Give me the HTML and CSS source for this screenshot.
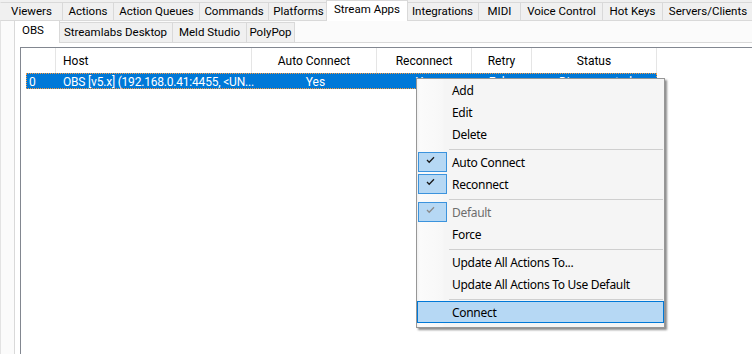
FILE: index.html
```html
<!DOCTYPE html>
<html>
<head>
<meta charset="utf-8">
<link rel="stylesheet" href="styles.css">
</head>
<body>
<div class="app">
  <div class="tabstrip top">
    <div class="tab">Viewers</div>
    <div class="tab">Actions</div>
    <div class="tab">Action Queues</div>
    <div class="tab">Commands</div>
    <div class="tab">Platforms</div>
    <div class="tab active">Stream Apps</div>
    <div class="tab">Integrations</div>
    <div class="tab">MIDI</div>
    <div class="tab">Voice Control</div>
    <div class="tab">Hot Keys</div>
    <div class="tab">Servers/Clients</div>
  </div>
  <div class="page">
    <div class="tabstrip sub">
      <div class="tab active">OBS</div>
      <div class="tab">Streamlabs Desktop</div>
      <div class="tab">Meld Studio</div>
      <div class="tab">PolyPop</div>
    </div>
    <div class="subpage">
      <div class="listview">
        <div class="lv-header">
          <div class="hc"></div>
          <div class="hc left">Host</div>
          <div class="hc">Auto Connect</div>
          <div class="hc">Reconnect</div>
          <div class="hc">Retry</div>
          <div class="hc">Status</div>
        </div>
        <div class="lv-row selected">
          <div class="rc left">0</div>
          <div class="rc left host">OBS [v5.x] (192.168.0.41:4455, &lt;UN...</div>
          <div class="rc">Yes</div>
          <div class="rc">Yes</div>
          <div class="rc">False</div>
          <div class="rc">Disconnected</div>
        </div>
      </div>
    </div>
  </div>

  <div class="menu">
    <div class="mi"><span class="gut"></span><span class="lbl">Add</span></div>
    <div class="mi"><span class="gut"></span><span class="lbl">Edit</span></div>
    <div class="mi"><span class="gut"></span><span class="lbl">Delete</span></div>
    <div class="sep"></div>
    <div class="mi"><span class="gut checked"><svg width="9" height="8" viewBox="0 0 9 8"><path d="M1 4 L3.2 6.2 L8 1.2" fill="none" stroke="#1a1a1a" stroke-width="1.3"/></svg></span><span class="lbl">Auto Connect</span></div>
    <div class="mi"><span class="gut checked"><svg width="9" height="8" viewBox="0 0 9 8"><path d="M1 4 L3.2 6.2 L8 1.2" fill="none" stroke="#1a1a1a" stroke-width="1.3"/></svg></span><span class="lbl">Reconnect</span></div>
    <div class="sep"></div>
    <div class="mi disabled"><span class="gut checked"><svg width="9" height="8" viewBox="0 0 9 8"><path d="M1 4 L3.2 6.2 L8 1.2" fill="none" stroke="#8a8a8a" stroke-width="1.3"/></svg></span><span class="lbl">Default</span></div>
    <div class="mi"><span class="gut"></span><span class="lbl">Force</span></div>
    <div class="sep"></div>
    <div class="mi"><span class="gut"></span><span class="lbl">Update All Actions To...</span></div>
    <div class="mi"><span class="gut"></span><span class="lbl">Update All Actions To Use Default</span></div>
    <div class="sep"></div>
    <div class="mi hover"><span class="gut"></span><span class="lbl">Connect</span></div>
  </div>
</div>
</body>
</html>
```

FILE: styles.css
```css
html, body {
  margin: 0;
  padding: 0;
}
body {
  width: 752px;
  height: 354px;
  overflow: hidden;
  background: #f0f0f0;
  font-family: Roboto, "Liberation Sans", sans-serif;
  font-size: 12px;
  color: #000;
}
.app {
  position: relative;
  width: 752px;
  height: 354px;
  display: flex;
  flex-direction: column;
}

/* tabs */
.tabstrip {
  display: flex;
  align-items: flex-end;
  position: relative;
  z-index: 2;
  font-size: 11.5px;
}
.tabstrip.top {
  height: 20px;
  flex: none;
}
.tab {
  height: 18px;
  line-height: 17px;
  text-align: center;
  background: #f0f0f0;
  border-left: 1px solid #d9d9d9;
  border-top: 1px solid #d9d9d9;
  white-space: nowrap;
  box-sizing: border-box;
  flex: none;
}
.tab:last-child {
  border-right: 1px solid #d9d9d9;
}
.tabstrip.top .tab:first-child {
  border-left-color: transparent;
}
.tabstrip.top .tab:nth-child(1) { width: 62px; }
.tabstrip.top .tab:nth-child(2) { width: 51px; }
.tabstrip.top .tab:nth-child(3) { width: 86px; }
.tabstrip.top .tab:nth-child(4) { width: 69px; }
.tabstrip.top .tab:nth-child(5) { width: 60px; }
.tabstrip.top .tab:nth-child(6) { width: 82px; }
.tabstrip.top .tab:nth-child(7) { width: 72px; }
.tabstrip.top .tab:nth-child(8) { width: 42px; }
.tabstrip.top .tab:nth-child(9) { width: 82px; }
.tabstrip.top .tab:nth-child(10) { width: 60px; }
.tabstrip.top .tab:nth-child(11) { width: 92px; }

.tab.active {
  background: #fff;
  height: 21px;
  line-height: 17px;
  margin: 0 -2px -1px -2px;
  border-right: 1px solid #d9d9d9;
  position: relative;
  z-index: 3;
}

.page {
  flex: 1;
  background: #fbfbfb;
  border-top: 1px solid #d9d9d9;
  border-left: 1px solid #e3e3e3;
  display: flex;
  flex-direction: column;
  padding-left: 13px;
  min-height: 0;
}
.tabstrip.sub {
  height: 21px;
  flex: none;
  padding-left: 2px;
}
.tabstrip.sub .tab {
  height: 20px;
  line-height: 19px;
}
.tabstrip.sub .tab:nth-child(1) { width: 46px; }
.tabstrip.sub .tab:nth-child(2) { width: 114px; }
.tabstrip.sub .tab:nth-child(3) { width: 74px; }
.tabstrip.sub .tab:nth-child(4) { width: 49px; }
.tabstrip.sub .tab.active {
  height: 23px;
  line-height: 19px;
  text-align: left;
  padding-left: 7px;
}
.subpage {
  flex: 1;
  background: #fff;
  border-top: 1px solid #d9d9d9;
  border-left: 1px solid #d9d9d9;
  padding: 4px 0 0 5px;
  min-height: 0;
}

/* listview */
.listview {
  height: 100%;
  border-top: 1px solid #828790;
  border-left: 1px solid #828790;
  background: #fff;
  position: relative;
}
.lv-header {
  display: grid;
  grid-template-columns: 35px 196px 125px 95px 60px 125px;
  height: 25px;
}
.hc {
  border-right: 1px solid #e5e5e5;
  display: flex;
  align-items: center;
  justify-content: center;
  padding-top: 1px;
  box-sizing: border-box;
  white-space: nowrap;
}
.hc.left {
  justify-content: flex-start;
  padding-left: 7px;
}
.lv-row {
  display: grid;
  grid-template-columns: 30px 196px 125px 95px 60px 125px;
  margin-left: 5px;
  width: 631px;
  height: 16px;
  box-sizing: border-box;
}
.lv-row.selected {
  background: #0078d7;
  color: #fff;
  border: 1px dotted #ff9b3d;
}
.rc {
  display: flex;
  align-items: center;
  justify-content: center;
  white-space: nowrap;
  line-height: 14px;
  padding-top: 1px;
}
.rc.left {
  justify-content: flex-start;
  padding-left: 2px;
}
.rc.host {
  padding-left: 6px;
  letter-spacing: -0.2px;
}

/* context menu */
.menu {
  position: absolute;
  left: 416px;
  top: 78px;
  width: 249px;
  height: 250px;
  box-sizing: border-box;
  background: linear-gradient(to right, #f0f0f0 0, #fbfbfb 3px, #f7f7f7 26px, #f5f5f5 27px, #f5f5f5 100%);
  border: 1px solid #979797;
  box-shadow: 2px 2px 2px rgba(0, 0, 0, 0.45);
  font-family: "Noto Sans", "Open Sans", sans-serif;
  font-size: 12px;
  z-index: 10;
}
.mi {
  height: 22px;
  display: flex;
  align-items: center;
  box-sizing: border-box;
  padding-left: 1px;
}
.gut {
  width: 29px;
  height: 20px;
  box-sizing: border-box;
  margin-right: 5px;
  flex: none;
  display: flex;
  align-items: flex-start;
  justify-content: center;
  padding-top: 3px;
}
.gut.checked {
  background: #b6d8f4;
  border: 1px solid #3b93dd;
}
.gut svg {
  display: block;
  margin-left: -4px;
}
.lbl {
  white-space: nowrap;
  letter-spacing: -0.3px;
  padding-top: 1px;
}
.mi.disabled .lbl {
  color: #6d6d6d;
}
.mi.hover {
  background: #b6d8f4;
  border: 1px solid #0078d7;
  padding-left: 0;
}
.sep {
  height: 6px;
  box-sizing: border-box;
  padding-top: 4px;
  padding-left: 32px;
  padding-right: 1px;
}
.sep::before {
  content: "";
  display: block;
  height: 1px;
  background: #cfcfcf;
}
```
